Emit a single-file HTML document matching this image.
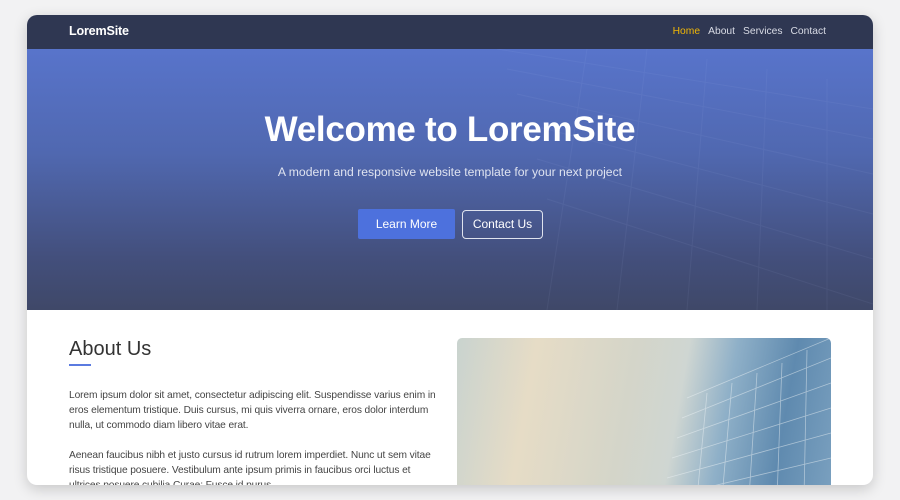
<!DOCTYPE html>
<html><head><style>
*{margin:0;padding:0;box-sizing:border-box}
body{width:900px;height:500px;background:#f2f2f3;font-family:"Liberation Sans",sans-serif;overflow:hidden;position:relative}
.card{position:absolute;left:27px;top:15px;width:846px;height:470px;border-radius:10px;overflow:hidden;background:#fff;box-shadow:0 4px 14px rgba(0,0,0,.18)}
.nav{height:34px;background:#2f3752;position:relative}
.logo{position:absolute;left:42px;top:9px;color:#fff;font-weight:bold;font-size:12.6px;letter-spacing:-.2px}
.links{position:absolute;right:47px;top:11px;font-size:10.3px;color:#d8dbe5}
.links span{margin-left:8px}
.hero{height:261px;position:relative;background:linear-gradient(180deg,#5874cb 0%,#5068b0 40%,#434f7c 80%,#3f4868 100%);overflow:hidden}
.hero h1{position:absolute;left:0;right:0;top:61px;text-align:center;color:#fff;font-size:35px;font-weight:bold;letter-spacing:-.3px}
.hero p{position:absolute;left:0;right:0;top:116px;text-align:center;color:#dfe3f0;font-size:12.2px}
.b1{position:absolute;left:331px;top:160px;width:97px;height:30px;background:#4d71dd;border-radius:2px;color:#fff;font-size:12px;text-align:center;line-height:30px}
.b2{position:absolute;left:435px;top:161px;width:81px;height:29px;border:1px solid #dfe3ee;border-radius:4px;color:#fff;font-size:12px;text-align:center;line-height:27px}
h2{position:absolute;left:42px;top:323px;font-size:20px;font-weight:normal;color:#333}
.ul{position:absolute;left:42px;top:349px;width:22px;height:2px;background:#5b7be0}
.txt{position:absolute;left:42px;top:373px;width:374px;font-size:10.2px;line-height:15px;color:#444;letter-spacing:-.1px}
.img{position:absolute;left:430px;top:323px;width:374px;height:160px;border-radius:5px;overflow:hidden;background:linear-gradient(100deg,#c9d3cf 0%,#e6dcc6 20%,#d4d5c9 45%,#cfd6d2 58%,#8fb0c8 70%,#5f8aaf 85%,#7aa0bf 100%)}
</style></head><body>
<div class="card">
<div class="nav"><div class="logo">LoremSite</div><div class="links"><span style="color:#f2b705">Home</span><span>About</span><span>Services</span><span>Contact</span></div></div>
<div class="hero">
<svg width="846" height="261" style="position:absolute;left:0;top:0;opacity:.06">
<g stroke="#c8d4ff" stroke-width="1" fill="none">
<path d="M470 0 L846 60 M480 20 L846 90 M490 45 L846 125 M500 75 L846 165 M510 110 L846 210 M520 150 L846 255"/>
<path d="M560 0 L520 261 M620 0 L590 261 M680 10 L660 261 M740 20 L730 261 M800 30 L800 261"/>
</g></svg>
<h1>Welcome to LoremSite</h1>
<p>A modern and responsive website template for your next project</p>
<div class="b1">Learn More</div><div class="b2">Contact Us</div>
</div>
<h2 style="top:323px">About Us</h2><div class="ul"></div>
<div class="txt">Lorem ipsum dolor sit amet, consectetur adipiscing elit. Suspendisse varius enim in eros elementum tristique. Duis cursus, mi quis viverra ornare, eros dolor interdum nulla, ut commodo diam libero vitae erat.<br><br>Aenean faucibus nibh et justo cursus id rutrum lorem imperdiet. Nunc ut sem vitae risus tristique posuere. Vestibulum ante ipsum primis in faucibus orci luctus et ultrices posuere cubilia Curae; Fusce id purus.</div>
<div class="img"><svg width="374" height="160" style="position:absolute;left:0;top:0;opacity:.5"><g stroke="#eef3f5" stroke-width=".8" fill="none">
<path d="M230 60 L374 0 M225 80 L374 20 M220 100 L374 45 M215 120 L374 70 M210 140 L374 95 M205 160 L374 120"/>
<path d="M250 55 L240 160 M275 45 L265 160 M300 35 L292 160 M325 25 L320 160 M350 12 L347 160"/></g></svg></div>
</div>
</body></html>
